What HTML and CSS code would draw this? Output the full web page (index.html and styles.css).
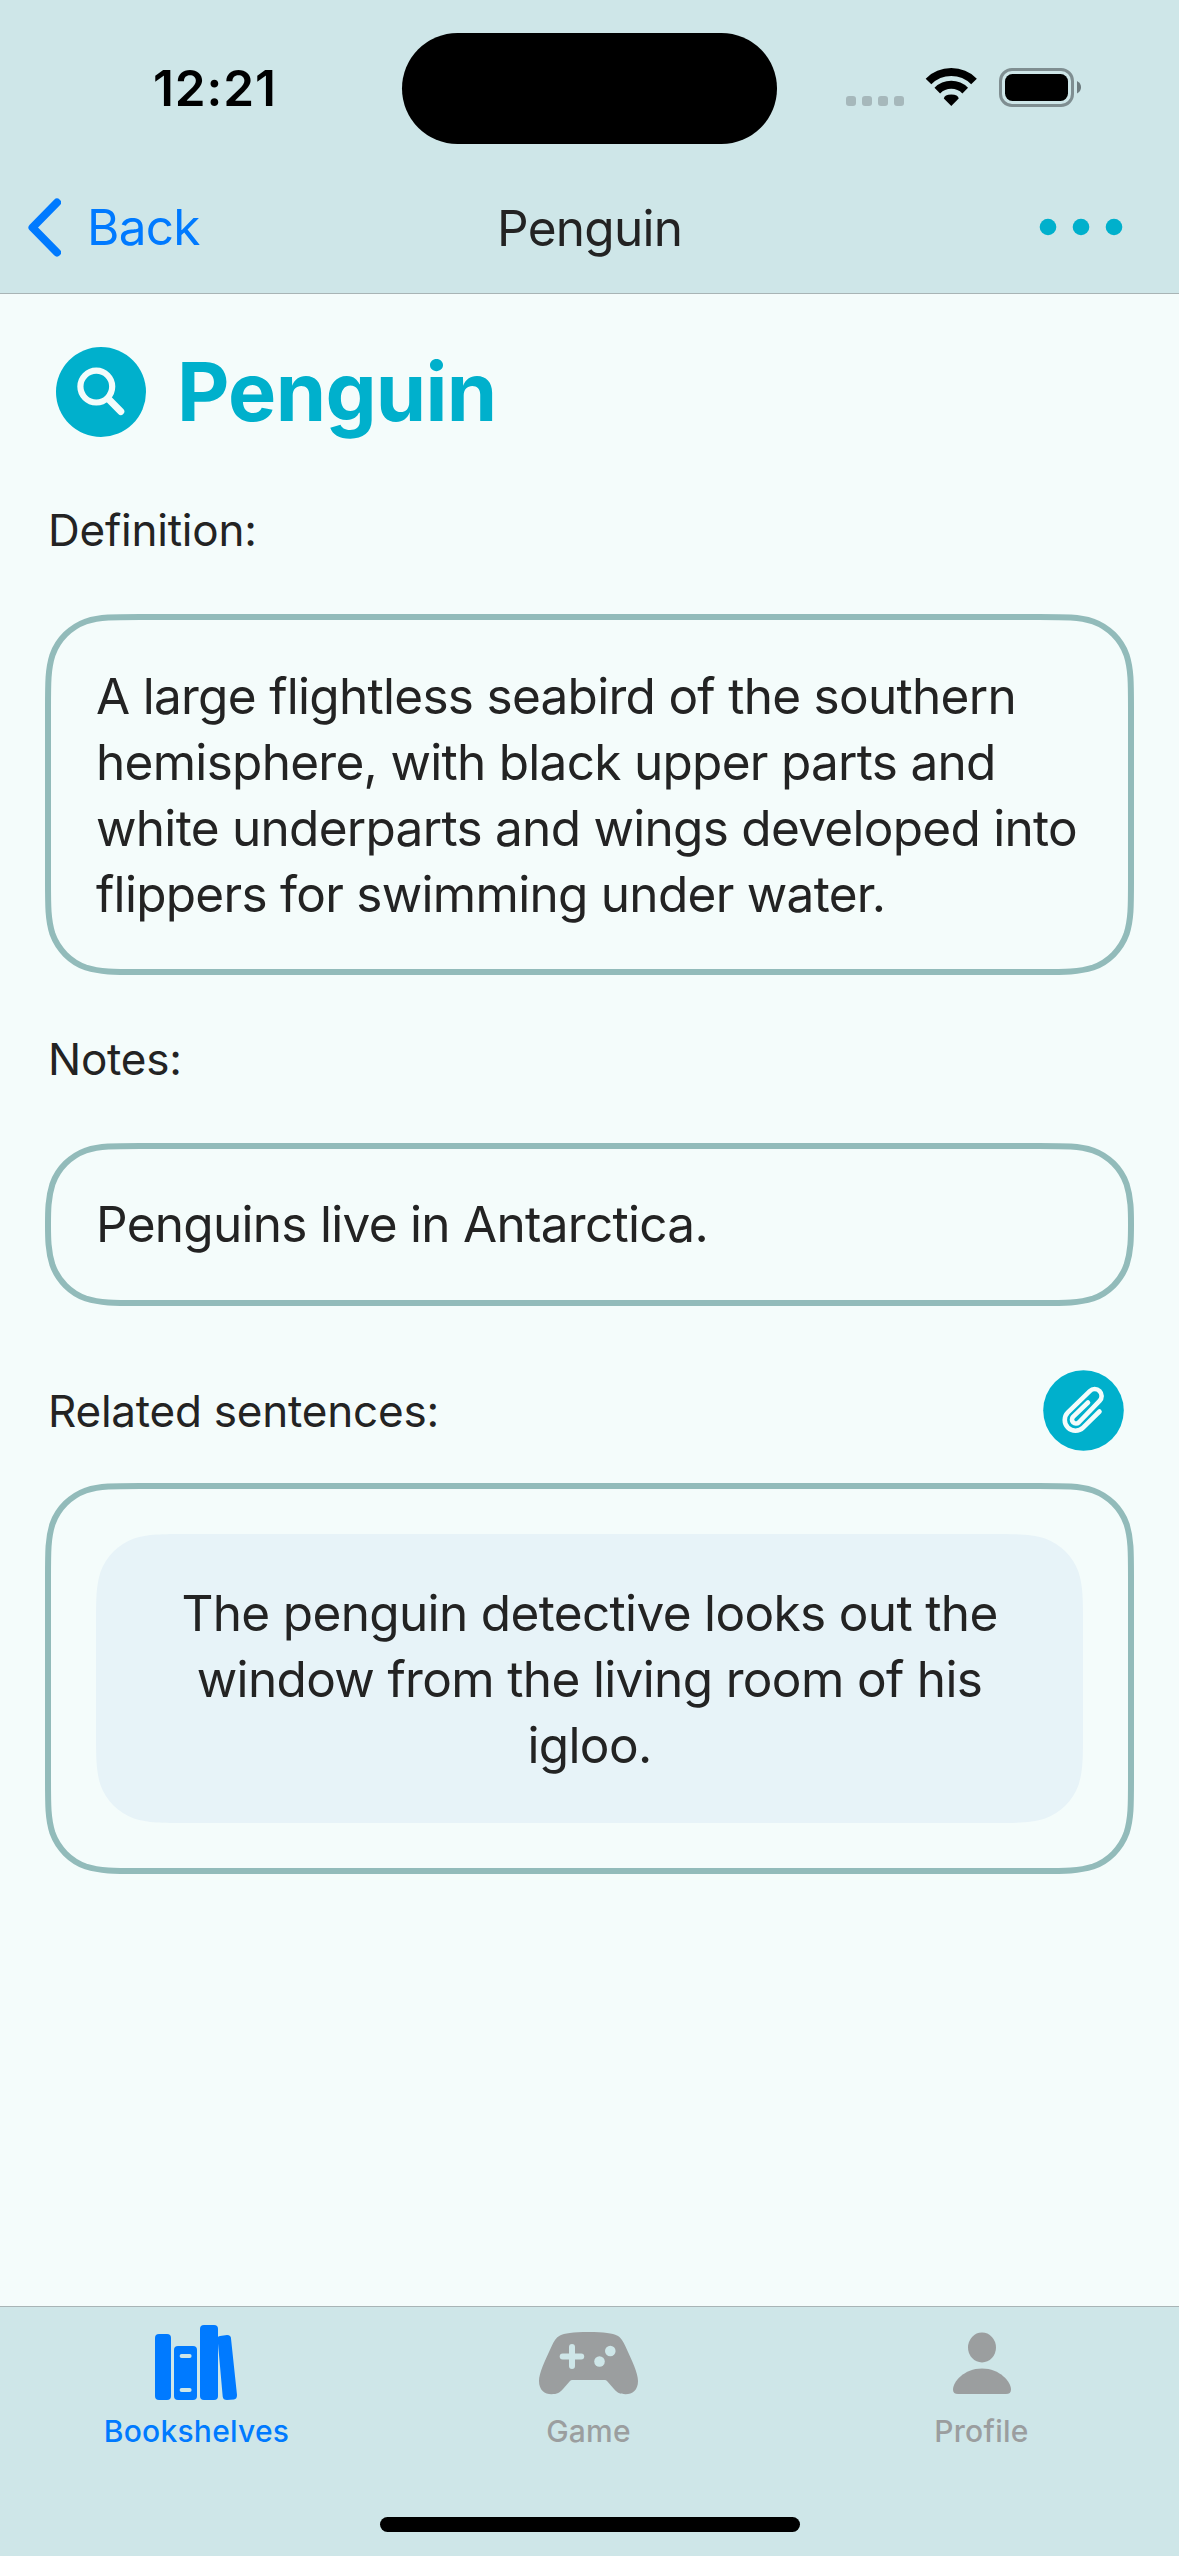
FILE: index.html
```
<!DOCTYPE html>
<html lang="en">
<head>
<meta charset="utf-8">
<title>Penguin</title>
<link rel="stylesheet" href="styles.css">
</head>
<body>
<div class="screen">
  <header class="top">
    <div class="status">
      <div class="time">12:21</div>
      <div class="island"></div>
      <svg class="status-icons" width="236" height="40" viewBox="0 0 236 40">
        <g fill="#a6b8bb"><rect x="0" y="28" width="10" height="10" rx="3"/><rect x="16" y="28" width="10" height="10" rx="3"/><rect x="32" y="28" width="10" height="10" rx="3"/><rect x="48" y="28" width="10" height="10" rx="3"/></g>
        <g fill="none" stroke="#000" stroke-width="8"><path d="M82.500 13.500A32.200 32.200 0 0 1 128 13.500"/><path d="M91.300 22.600A19.800 19.800 0 0 1 119.200 22.600"/></g>
        <path d="M105.300 38L97.800 30.400Q98.500 26.500 105.300 26.500T112.700 30.400Z"/>
        <rect x="154.500" y="1.500" width="72" height="36" rx="11.500" fill="none" stroke="#7f8e91" stroke-width="3"/>
        <rect x="159" y="6" width="63" height="27" rx="7.500"/>
        <path d="M231 13Q235 15 235 19.300T231 25.500Z" fill="#6e7c7f"/>
      </svg>
    </div>
    <nav class="nav">
      <a class="back"><svg width="35" height="60" viewBox="0 0 35 60"><path d="M31 5.500L6.500 30.500L31 55.500" fill="none" stroke="#007aff" stroke-width="8" stroke-linecap="round" stroke-linejoin="round"/></svg><span>Back</span></a>
      <span class="nav-title">Penguin</span>
      <svg class="more" width="84" height="18" viewBox="0 0 84 18" fill="#00b0cc"><circle cx="9" cy="9" r="8.300"/><circle cx="42" cy="9" r="8.300"/><circle cx="75" cy="9" r="8.300"/></svg>
    </nav>
  </header>

  <main class="content">
    <div class="word">
      <svg width="90" height="90" viewBox="0 0 90 90"><circle cx="45" cy="45" r="45" fill="#00b0cc"/><g fill="none" stroke="#f4fcfb" stroke-linecap="round"><circle cx="40.300" cy="39.600" r="15.900" stroke-width="6.200"/><path d="M52.500 52L64.800 64.500" stroke-width="7"/></g></svg>
      <h1>Penguin</h1>
    </div>

    <h2 class="label label-definition">Definition:</h2>
    <section class="card card-definition">
      <svg class="frame" width="1089" height="361" viewBox="-3 -3 1089 361"><path d="M91.700 0H991.300C1017.700 0 1030.900 0 1045.100 4.500C1060.600 10.100 1072.900 22.400 1078.500 37.900C1083 52.100 1083 65.300 1083 91.700V263.300C1083 289.700 1083 302.900 1078.500 317.100C1072.900 332.600 1060.600 344.900 1045.100 350.500C1030.900 355 1017.700 355 991.300 355H91.700C65.300 355 52.100 355 37.900 350.500C22.400 344.900 10.100 332.600 4.500 317.100C0 302.900 0 289.700 0 263.300V91.700C0 65.300 0 52.100 4.500 37.900C10.100 22.400 22.400 10.100 37.900 4.500C52.100 0 65.300 0 91.700 0Z"/></svg>
      <p>A large flightless seabird of the southern<br>hemisphere, with black upper parts and<br>white underparts and wings developed into<br>flippers for swimming under water.</p>
    </section>

    <h2 class="label label-notes">Notes:</h2>
    <section class="card card-notes">
      <svg class="frame" width="1089" height="163" viewBox="-3 -3 1089 163"><path d="M91.700 0H991.300C1017.700 0 1030.900 0 1045.100 4.500C1060.600 10.100 1072.900 22.400 1078.500 37.900C1083 52.100 1083 65.300 1083 78.500C1083 91.700 1083 104.900 1078.500 119.100C1072.900 134.600 1060.600 146.900 1045.100 152.500C1030.900 157 1017.700 157 991.300 157H91.700C65.300 157 52.100 157 37.900 152.500C22.400 146.900 10.100 134.600 4.500 119.100C0 104.900 0 91.700 0 78.500C0 65.300 0 52.100 4.500 37.900C10.100 22.400 22.400 10.100 37.900 4.500C52.100 0 65.300 0 91.700 0Z"/></svg>
      <p>Penguins live in Antarctica.</p>
    </section>

    <div class="related">
      <h2 class="label">Related sentences:</h2>
      <svg width="81" height="81" viewBox="0 0 81 81"><circle cx="40.500" cy="40.500" r="40.300" fill="#00b0cc"/><path d="M56.500 41.500L40.100 57.600A10.700 10.700 0 0 1 24.900 42.400L46.800 21.100A6.900 6.900 0 0 1 56.600 30.900L35.700 52.500A4 4 0 0 1 30 46.900L45 32.500" fill="none" stroke="#f4fcfb" stroke-width="4.600" stroke-linecap="round" stroke-linejoin="round"/></svg>
    </div>
    <section class="card card-related">
      <svg class="frame" width="1089" height="391" viewBox="-3 -3 1089 391"><path d="M91.700 0H991.300C1017.700 0 1030.900 0 1045.100 4.500C1060.600 10.100 1072.900 22.400 1078.500 37.900C1083 52.100 1083 65.300 1083 91.700V293.300C1083 319.700 1083 332.900 1078.500 347.100C1072.900 362.600 1060.600 374.900 1045.100 380.500C1030.900 385 1017.700 385 991.300 385H91.700C65.300 385 52.100 385 37.900 380.500C22.400 374.900 10.100 362.600 4.500 347.100C0 332.900 0 319.700 0 293.300V91.700C0 65.300 0 52.100 4.500 37.900C10.100 22.400 22.400 10.100 37.900 4.500C52.100 0 65.300 0 91.700 0Z"/></svg>
      <div class="sentence">
        <svg class="bubble" width="987" height="289" viewBox="0 0 987 289"><path d="M91.700 0H895.300C921.700 0 934.900 0 949.100 4.500C964.600 10.100 976.900 22.400 982.500 37.900C987 52.100 987 65.300 987 91.700V197.300C987 223.700 987 236.900 982.500 251.100C976.900 266.600 964.600 278.900 949.100 284.500C934.900 289 921.700 289 895.300 289H91.700C65.300 289 52.100 289 37.900 284.500C22.400 278.900 10.100 266.600 4.500 251.100C0 236.900 0 223.700 0 197.300V91.700C0 65.300 0 52.100 4.500 37.900C10.100 22.400 22.400 10.100 37.900 4.500C52.100 0 65.300 0 91.700 0Z"/></svg>
        <p>The penguin detective looks out the<br>window from the living room of his<br>igloo.</p>
      </div>
    </section>
  </main>

  <footer class="tabs">
    <a class="tab tab-books">
      <svg width="84" height="78" viewBox="0 0 84 78" fill="#007aff"><rect x="0" y="10" width="16" height="66" rx="4"/><rect x="19" y="22" width="23" height="54" rx="4"/><rect x="45" y="1" width="18" height="75" rx="4"/><path d="M62.500 14Q63 12 65 12L72 11Q76 11 76 14.500L82 71Q82 75 79 75.500L72 76Q68 76 67.700 72.500Z"/><g fill="#cee6e8"><rect x="24.600" y="30" width="12" height="4" rx="2"/><rect x="24.600" y="64" width="12" height="4" rx="2"/></g></svg>
      <span>Bookshelves</span>
    </a>
    <a class="tab tab-game">
      <svg width="99" height="78" viewBox="0 0 99 78"><path fill="#9b9e9f" d="M49.500 9C34 9 25 10.500 21 12.500C17 14.500 15 18 12.500 23.500C6 37.500 0 50 0 58C0 67 5.500 71.200 12.500 71.200C18 71.200 21 69.500 24 66L31 58Q32 57 33 57H66Q67 57 68 58L75 66C78 69.500 81 71.200 86.500 71.200C93.500 71.200 99 67 99 58C99 50 93 37.500 86.500 23.500C84 18 82 14.500 78 12.500C74 10.500 65 9 49.500 9Z"/><g fill="#cee6e8"><rect x="30" y="21" width="6" height="25" rx="3"/><rect x="20.700" y="30.500" width="24.500" height="6" rx="3"/><circle cx="71.300" cy="28" r="5.300"/><circle cx="60.500" cy="38.500" r="5.300"/></g></svg>
      <span>Game</span>
    </a>
    <a class="tab tab-profile">
      <svg width="58" height="78" viewBox="0 0 58 78" fill="#9b9e9f"><ellipse cx="29" cy="24.500" rx="14" ry="15"/><path d="M29 45.500C11 45.500 0 59 0 66.500Q0 71 5 71H53Q58 71 58 66.500C58 59 47 45.500 29 45.500Z"/></svg>
      <span>Profile</span>
    </a>
    <div class="home"></div>
  </footer>
</div>
</body>
</html>
```
FILE: styles.css
```
* { box-sizing: border-box; margin: 0; padding: 0; }
body { background: #f4fcfb; }
svg { display: block; }
.screen {
  width: 1179px; height: 2556px; display: flex; flex-direction: column;
  background: #f4fcfb; color: #232323;
  font-family: Inter, "Liberation Sans", sans-serif; font-size: 49.5px;
}
.top { height: 294px; background: #cee6e8; border-bottom: 1px solid #a8b4b5; }
.status { height: 168px; display: grid; grid-template-columns: 402px 375px 1fr; align-items: start; }
.time { padding: 58px 0 0 153px; font-weight: 600; line-height: 60px; letter-spacing: 0.9px; color: #000; }
.island { height: 111px; margin-top: 33px; border-radius: 56px; background: #000; }
.status-icons { margin: 68px 0 0 69px; }
.nav { height: 118px; padding: 0 56px 0 26px; display: grid; grid-template-columns: 471px 1fr 84px; align-items: center; letter-spacing: -0.7px; }
.back { display: flex; align-items: center; gap: 26px; color: #007aff; }
.nav-title { line-height: 60px; padding-top: 1px; }
.more { justify-self: end; }
.content { flex: 1; padding: 0 45px; }
.word { display: flex; align-items: center; gap: 31px; padding: 53px 0 0 11px; height: 143px; }
h1 { font-size: 81px; font-weight: 700; line-height: 90px; letter-spacing: -0.7px; color: #00b0cc; }
.label { font-size: 44px; font-weight: 400; line-height: 54px; letter-spacing: -0.22px; padding-left: 3px; }
.label-definition { margin-top: 66px; }
.label-notes { margin-top: 57px; }
.card { position: relative; width: 1089px; padding-left: 51px; line-height: 66px; letter-spacing: -0.71px; }
.frame { position: absolute; inset: 0; fill: none; stroke: #92bbba; stroke-width: 6; }
.card-definition { height: 361px; margin-top: 57px; padding-top: 49px; }
.card-notes { height: 163px; margin-top: 57px; padding-top: 48px; }
.related { display: flex; justify-content: space-between; align-items: center; margin-top: 64px; padding-right: 10px; }
.card-related { height: 391px; margin-top: 32px; padding-top: 51px; }
.sentence { position: relative; width: 987px; height: 289px; padding-top: 46px; text-align: center; letter-spacing: -0.65px; }
.sentence p { position: relative; }
.bubble { position: absolute; inset: 0; fill: #e7f3f8; }
.tabs { position: relative; height: 250px; display: grid; grid-template-columns: repeat(3, 1fr); background: #cee6e8; border-top: 1px solid #a8b4b5; }
.tab { display: flex; flex-direction: column; align-items: center; gap: 9px; padding-top: 17px; font-size: 30px; font-weight: 500; line-height: 40px; letter-spacing: 0.25px; color: #9b9e9f; }
.tab-books { color: #007aff; }
.tab-game, .tab-profile { padding-right: 2px; padding-top: 16px; gap: 10px; }
.home { position: absolute; left: 380px; bottom: 24px; width: 420px; height: 15px; border-radius: 8px; background: #000; }
```
